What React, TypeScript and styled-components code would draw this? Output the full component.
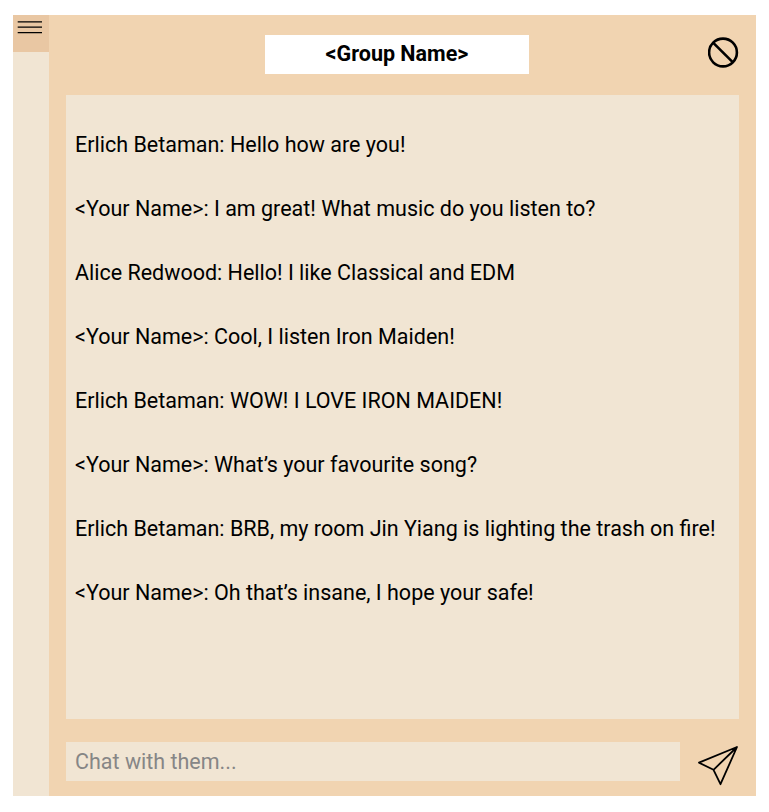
import React from "react";
import styled, { createGlobalStyle } from "styled-components";

const GlobalStyle = createGlobalStyle`
  * { box-sizing: border-box; }
  body {
    margin: 0;
    background: #fff;
    color: #000;
    font-family: Roboto, "Liberation Sans", sans-serif;
  }
`;

const Window = styled.div`
  display: flex;
  width: 743px;
  height: 781.5px;
  margin: 14.5px 0 0 13px;
  background: #f1d4b1;
`;

const Sidebar = styled.aside`
  width: 36px;
  background: #f1e5d3;
`;

const MenuButton = styled.button`
  display: flex;
  width: 36px;
  height: 37.5px;
  padding: 5px 0 0 4px;
  border: 0;
  background: #e9c7a3;
`;

const Chat = styled.main`
  display: flex;
  flex-direction: column;
  flex: 1;
  padding: 0 17px 15px 17px;
`;

const Header = styled.header`
  display: grid;
  grid-template-columns: 199px 264px 1fr;
  height: 80px;
  padding-top: 20.5px;
`;

const Title = styled.h1`
  grid-column: 2;
  height: 38.5px;
  margin: 0;
  background: #fff;
  font-size: 21.5px;
  font-weight: 700;
  line-height: 38.5px;
  text-align: center;
`;

const IconButton = styled.button`
  display: flex;
  justify-self: end;
  align-self: start;
  padding: 0;
  border: 0;
  background: none;
`;

const Messages = styled.ul`
  flex: 1;
  margin: 0;
  padding: 18px 9px;
  list-style: none;
  background: #f1e5d3;
`;

const Message = styled.li`
  height: 64px;
  font-size: 21.5px;
  line-height: 64px;
  white-space: nowrap;
`;

const Composer = styled.form`
  display: flex;
  justify-content: space-between;
  margin-top: 23px;
  height: 39px;
`;

const Input = styled.input`
  width: 614px;
  height: 39px;
  padding: 0 9px;
  border: 0;
  border-radius: 0;
  background: #f1e5d3;
  font-family: inherit;
  font-size: 21.5px;
  &::placeholder { color: #868686; opacity: 1; }
`;

const messages = [
  ["Erlich Betaman", "Hello how are you!"],
  ["<Your Name>", "I am great! What music do you listen to?"],
  ["Alice Redwood", "Hello! I like Classical and EDM"],
  ["<Your Name>", "Cool, I listen Iron Maiden!"],
  ["Erlich Betaman", "WOW! I LOVE IRON MAIDEN!"],
  ["<Your Name>", "What’s your favourite song?"],
  ["Erlich Betaman", "BRB, my room Jin Yiang is lighting the trash on fire!"],
  ["<Your Name>", "Oh that’s insane, I hope your safe!"],
];

export default function App() {
  return (
    <>
      <GlobalStyle />
      <Window>
        <Sidebar>
          <MenuButton aria-label="Menu">
            <svg width="26" height="16" viewBox="0 0 26 16" stroke="#000" strokeWidth="1.25">
              <path d="M.7 1.8H25M.7 7.2H25M.7 12.5H25" />
            </svg>
          </MenuButton>
        </Sidebar>
        <Chat>
          <Header>
            <Title>&lt;Group Name&gt;</Title>
            <IconButton aria-label="Block">
              <svg width="31" height="35" viewBox="0 0 31 35" fill="none" stroke="#000" strokeWidth="2.6">
                <circle cx="15" cy="17.5" r="13.9" />
                <path d="M5.3 7.8L24.7 27.2" />
              </svg>
            </IconButton>
          </Header>
          <Messages>
            {messages.map(([author, text]) => (
              <Message key={text}>{author}: {text}</Message>
            ))}
          </Messages>
          <Composer>
            <Input placeholder="Chat with them..." />
            <IconButton type="button" aria-label="Send">
              <svg width="42" height="45" viewBox="0 0 42 45" fill="none" stroke="#000" strokeWidth="1.8" strokeLinejoin="round">
                <path d="M40 5L2 20.7L16.5 27.8L23.5 42.2ZM40 5L16.5 27.8" />
              </svg>
            </IconButton>
          </Composer>
        </Chat>
      </Window>
    </>
  );
}
